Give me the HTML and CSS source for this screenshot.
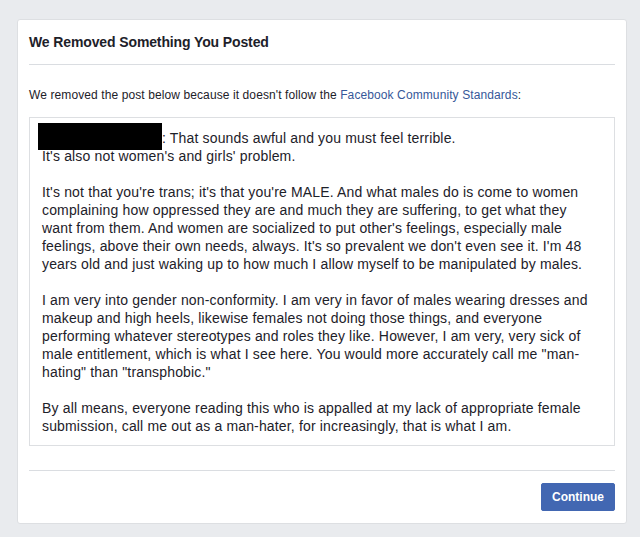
FILE: index.html
```html
<!DOCTYPE html>
<html>
<head>
<meta charset="utf-8">
<link rel="stylesheet" href="styles.css">
</head>
<body>
<div class="card">
  <div class="header"><h1 class="title">We Removed Something You Posted</h1></div>
  <div class="content">
    <p class="intro">We removed the post below because it doesn't follow the <a class="link" href="#">Facebook Community Standards</a>:</p>
    <div class="post">
      <p class="para"><span class="redact"></span>: That sounds awful and you must feel terrible.<br>It's also not women's and girls' problem.</p>
      <p class="para">It's not that you're trans; it's that you're MALE. And what males do is come to women<br>complaining how oppressed they are and much they are suffering, to get what they<br>want from them. And women are socialized to put other's feelings, especially male<br>feelings, above their own needs, always. It's so prevalent we don't even see it. I'm 48<br>years old and just waking up to how much I allow myself to be manipulated by males.</p>
      <p class="para">I am very into gender non-conformity. I am very in favor of males wearing dresses and<br>makeup and high heels, likewise females not doing those things, and everyone<br>performing whatever stereotypes and roles they like. However, I am very, very sick of<br>male entitlement, which is what I see here. You would more accurately call me "man-<br>hating" than "transphobic."</p>
      <p class="para">By all means, everyone reading this who is appalled at my lack of appropriate female<br>submission, call me out as a man-hater, for increasingly, that is what I am.</p>
    </div>
  </div>
  <div class="footer"><button class="btn">Continue</button></div>
</div>
</body>
</html>
```
FILE: styles.css
```css
html, body {
  margin: 0;
  padding: 0;
}
body {
  background: #e9ebee;
  font-family: "Liberation Sans", Helvetica, Arial, sans-serif;
  color: #1d2129;
  padding: 19px 0 0 17px;
  height: 537px;
  box-sizing: border-box;
}
.card {
  width: 610px;
  box-sizing: border-box;
  background: #fff;
  border: 1px solid #dddfe2;
  border-radius: 3px;
}
.header {
  margin: 0 11px;
  padding: 13px 0 13px;
  border-bottom: 1px solid #dadde1;
}
.title {
  margin: 0;
  font-size: 14px;
  line-height: 18px;
  font-weight: bold;
  letter-spacing: -0.12px;
  color: #1d2129;
}
.content {
  margin: 0 11px;
  padding: 22px 0 24px;
  border-bottom: 1px solid #dadde1;
}
.intro {
  margin: 0 0 14px;
  font-size: 12px;
  line-height: 16px;
  letter-spacing: 0.1px;
}
.link {
  color: #365899;
  text-decoration: none;
}
.post {
  border: 1px solid #dddfe2;
  padding: 11px 12px 10px;
  font-size: 14px;
  line-height: 18px;
  letter-spacing: 0.16px;
  color: #1d2129;
}
.para {
  margin: 0 0 18px;
  white-space: nowrap;
}
.para:last-child {
  margin-bottom: 0;
}
.redact {
  display: inline-block;
  width: 124px;
  height: 27px;
  background: #000;
  margin: -8px 0 -7px -4px;
  vertical-align: baseline;
}
.footer {
  margin: 0 11px;
  padding: 12px 0 12px;
  display: flex;
  justify-content: flex-end;
}
.btn {
  background: #4267b2;
  border: 1px solid #4267b2;
  border-radius: 2px;
  color: #fff;
  font-family: "Liberation Sans", Helvetica, Arial, sans-serif;
  font-size: 12px;
  font-weight: bold;
  height: 28px;
  width: 74px;
  padding: 0;
}
```
